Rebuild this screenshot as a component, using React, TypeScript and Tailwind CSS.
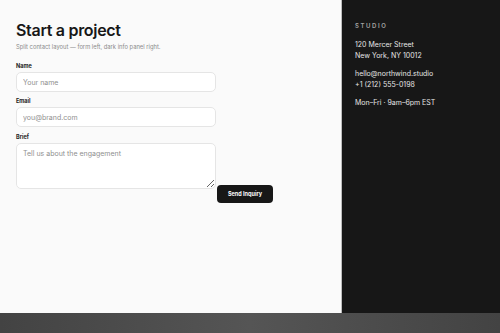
export default function App() {
  const font = { fontFamily: 'Inter, "Liberation Sans", sans-serif' }
  return (
    <div className="flex h-[333px] w-[500px] flex-col" style={font}>
      <div className="flex h-[313px]">
        {/* Form side */}
        <div className="w-[342px] border-r border-[#bdbdbd] bg-[#fafafa] pl-4 pt-[19px]">
          <h1 className="text-[16px] font-semibold leading-[22px] tracking-[-0.3px] text-[#171717]">
            Start a project
          </h1>
          <p className="mt-[1px] text-[5.8px] leading-[10px] text-[#8a8a8a]">
            Split contact layout — form left, dark info panel right.
          </p>

          <div className="mt-[10px]">
            <label className="block text-[5.5px] font-bold leading-[8px] text-[#222]">Name</label>
            <input
              className="mt-[2px] block h-[20px] w-[200px] rounded-[5px] border border-[#e5e5e5] bg-white px-[6px] text-[7px] text-[#171717] placeholder:text-[#8f8f8f] focus:outline-none"
              placeholder="Your name"
            />
          </div>

          <div className="mt-[5px]">
            <label className="block text-[5.5px] font-bold leading-[8px] text-[#222]">Email</label>
            <input
              className="mt-[2px] block h-[20px] w-[200px] rounded-[5px] border border-[#e5e5e5] bg-white px-[6px] text-[7px] text-[#171717] placeholder:text-[#8f8f8f] focus:outline-none"
              placeholder="you@brand.com"
            />
          </div>

          <div className="mt-[6px]">
            <label className="block text-[5.5px] font-bold leading-[8px] text-[#222]">Brief</label>
            <div className="mt-[2px] flex items-end">
              <textarea
                className="block h-[46px] w-[200px] resize-y rounded-[5px] border border-[#e5e5e5] bg-white px-[6px] py-[5px] text-[7px] text-[#171717] placeholder:text-[#8f8f8f] focus:outline-none"
                placeholder="Tell us about the engagement"
              />
              <button className="-mb-[14px] ml-px h-[18px] w-[56px] rounded-[4px] bg-[#171717] text-[5.5px] font-bold text-white">
                Send Inquiry
              </button>
            </div>
          </div>
        </div>

        {/* Info panel */}
        <div className="flex-1 bg-[#171717] pl-[13px] pt-[20px] text-[7px] leading-[11px] text-[#e5e5e5]">
          <div className="text-[6px] font-semibold tracking-[1.6px] text-[#a3a3a3]">STUDIO</div>
          <div className="mt-[8px]">
            <div>120 Mercer Street</div>
            <div>New York, NY 10012</div>
          </div>
          <div className="mt-[7px]">
            <div>hello@northwind.studio</div>
            <div>+1 (212) 555-0198</div>
          </div>
          <div className="mt-[7px]">Mon–Fri · 9am–6pm EST</div>
        </div>
      </div>
      <div className="flex-1 bg-gradient-to-r from-[#434343] via-[#555555] to-[#434343]" />
    </div>
  )
}
